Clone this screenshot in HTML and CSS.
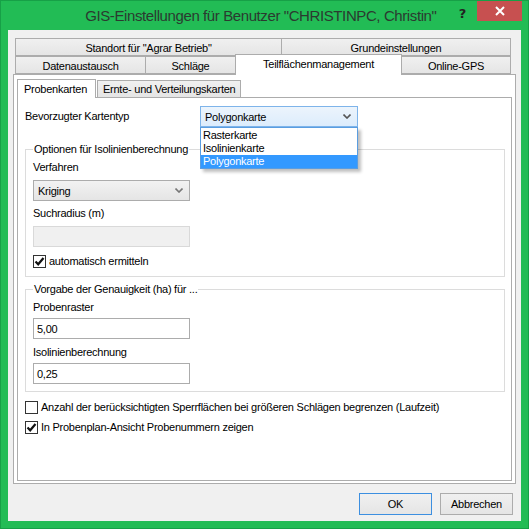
FILE: index.html
```html
<!DOCTYPE html>
<html lang="de">
<head>
    <meta charset="UTF-8">
    <title>GIS-Einstellungen</title>
    <link rel="stylesheet" href="styles.css">
</head>
<body>
    <div class="window">
        <header class="titlebar">
            <span class="title">GIS-Einstellungen für Benutzer "CHRISTINPC, Christin"</span>
            <span class="help-btn">?</span>
            <span class="close-btn">
                <svg width="10" height="10" viewBox="0 0 10 10" aria-hidden="true">
                    <path d="M1 1 L9 9 M9 1 L1 9" stroke="#fff" stroke-width="2"/>
                </svg>
            </span>
        </header>

        <main class="client">
            <div class="tabs">
                <div class="tab-row">
                    <span class="tab w266">Standort für "Agrar Betrieb"</span>
                    <span class="tab w230">Grundeinstellungen</span>
                </div>
                <div class="tab-row">
                    <span class="tab w130">Datenaustausch</span>
                    <span class="tab w90">Schläge</span>
                    <span class="tab w167 active">Teilflächenmanagement</span>
                    <span class="tab w109">Online-GPS</span>
                </div>
                <div class="panel outer-panel">
                    <div class="subtabs">
                        <span class="subtab active">Probenkarten</span>
                        <span class="subtab">Ernte- und Verteilungskarten</span>
                    </div>
                    <div class="panel inner-panel">
                        <div class="form-row">
                            <span class="label">Bevorzugter Kartentyp</span>
                            <div class="combo combo-open">
                                <span>Polygonkarte</span>
                                <svg class="chevron" width="8" height="5" viewBox="0 0 8 5" aria-hidden="true">
                                    <path d="M0.5 0.5 L4 4 L7.5 0.5" stroke="#555" stroke-width="1.6" fill="none"/>
                                </svg>
                                <ul class="dropdown">
                                    <li>Rasterkarte</li>
                                    <li>Isolinienkarte</li>
                                    <li class="selected">Polygonkarte</li>
                                </ul>
                            </div>
                        </div>

                        <fieldset class="group">
                            <legend>Optionen für Isolinienberechnung</legend>
                            <div class="field-label">Verfahren</div>
                            <div class="combo combo-small">
                                <span>Kriging</span>
                                <svg class="chevron" width="8" height="5" viewBox="0 0 8 5" aria-hidden="true">
                                    <path d="M0.5 0.5 L4 4 L7.5 0.5" stroke="#777" stroke-width="1.6" fill="none"/>
                                </svg>
                            </div>
                            <div class="field-label">Suchradius (m)</div>
                            <div class="textbox disabled"></div>
                            <label class="check check-in-group">
                                <span class="box checked"><svg width="11" height="11" viewBox="0 0 11 11" aria-hidden="true"><path d="M1.5 5.5 L4.2 8.3 L9.5 2" stroke="#111" stroke-width="2.2" fill="none"/></svg></span>
                                automatisch ermitteln
                            </label>
                        </fieldset>

                        <fieldset class="group group-second">
                            <legend>Vorgabe der Genauigkeit (ha) für ...</legend>
                            <div class="field-label">Probenraster</div>
                            <div class="textbox">5,00</div>
                            <div class="field-label">Isolinienberechnung</div>
                            <div class="textbox">0,25</div>
                        </fieldset>

                        <label class="check check-first">
                            <span class="box"></span>
                            Anzahl der berücksichtigten Sperrflächen bei größeren Schlägen begrenzen (Laufzeit)
                        </label>
                        <label class="check">
                            <span class="box checked"><svg width="11" height="11" viewBox="0 0 11 11" aria-hidden="true"><path d="M1.5 5.5 L4.2 8.3 L9.5 2" stroke="#111" stroke-width="2.2" fill="none"/></svg></span>
                            In Probenplan-Ansicht Probenummern zeigen
                        </label>
                    </div>
                </div>
            </div>

            <footer class="buttons">
                <span class="btn default">OK</span>
                <span class="btn">Abbrechen</span>
            </footer>
        </main>
    </div>
</body>
</html>
```

FILE: styles.css
```css
* {
    box-sizing: border-box;
}
body {
    margin: 0;
    background: #fff;
    font-family: 'Liberation Sans', Arial, sans-serif;
    font-size: 11px;
    letter-spacing: -0.25px;
    color: #000;
}
.window {
    width: 529px;
    height: 529px;
    background: #22bc55;
    border: 1px solid #17a047;
    display: flex;
    flex-direction: column;
}

/* title bar */
.titlebar {
    height: 29px;
    display: flex;
    align-items: flex-start;
}
.title {
    flex-grow: 1;
    text-align: center;
    white-space: nowrap;
    font-family: 'Liberation Sans', Arial, sans-serif;
    font-size: 15px;
    letter-spacing: -0.4px;
    color: #2b3a30;
    padding: 6px 0 0 72px;
}
.help-btn {
    font-family: 'DejaVu Sans', sans-serif;
    font-weight: bold;
    font-size: 13px;
    color: #222;
    margin: 5px 11px 0 10px;
}
.close-btn {
    width: 45px;
    height: 20px;
    background: #c75050;
    display: flex;
    align-items: center;
    justify-content: center;
    margin-right: 6px;
}

/* dialog body */
.client {
    flex-grow: 1;
    margin: 0 7px 7px 7px;
    background: #f0f0f0;
    display: flex;
    flex-direction: column;
}
.tabs {
    margin: 8px 5px 0 5px;
}
.tab-row {
    display: flex;
    padding-left: 2px;
    height: 18px;
}
.tab {
    height: 18px;
    border: 1px solid #acacac;
    border-right: none;
    background: linear-gradient(#f0f0f0, #e5e5e5);
    display: flex;
    align-items: center;
    justify-content: center;
    padding-top: 1px;
}
.tab:last-child {
    border-right: 1px solid #acacac;
}
.w266 { width: 266px; }
.w230 { width: 230px; }
.w130 { width: 130px; }
.w90 { width: 90px; }
.w167 { width: 167px; }
.w109 { width: 109px; }
.tab.active {
    background: #fff;
    height: 21px;
    margin-top: -2px;
    border-bottom: none;
    border-right: 1px solid #acacac;
    position: relative;
    z-index: 1;
    padding: 0 0 3px 0;
}
.tab.active + .tab {
    border-left: none;
}
.panel {
    border: 1px solid #acacac;
    background: #fff;
}
.outer-panel {
    height: 410px;
    padding: 3px;
}
.subtabs {
    display: flex;
    align-items: flex-end;
    height: 19px;
}
.subtab {
    height: 17px;
    padding: 2px 5px 0 5px;
    border: 1px solid #acacac;
    border-bottom: none;
    background: linear-gradient(#f0f0f0, #e5e5e5);
    margin-left: 1px;
}
.subtab.active {
    height: 19px;
    width: 79px;
    margin-left: 0;
    background: #fff;
    padding: 3px 0 0 6px;
    margin-bottom: -1px;
    position: relative;
    z-index: 1;
}
.inner-panel {
    height: 384px;
    padding: 0 6px 0 7px;
}

/* form parts */
.form-row {
    display: flex;
    align-items: center;
    margin-top: 8px;
}
.label {
    width: 175px;
    margin-bottom: 2px;
}
.combo {
    position: relative;
    display: flex;
    align-items: center;
    justify-content: space-between;
    height: 21px;
    padding: 0 6px 0 4px;
    border: 1px solid #acacac;
    background: linear-gradient(#f2f2f2, #e5e5e5);
}
.combo-open {
    width: 158px;
    border-color: #7eb4ea;
    background: linear-gradient(#ecf4fc, #dcecfc);
}
.combo-small {
    width: 157px;
    margin-top: 6px;
}
.dropdown {
    position: absolute;
    top: 20px;
    left: -1px;
    width: 158px;
    margin: 0;
    padding: 1px 0 0 0;
    list-style: none;
    background: #fff;
    border: 1px solid #5a9de0;
    box-shadow: 3px 3px 3px rgba(0,0,0,0.25);
    z-index: 2;
}
.dropdown li {
    height: 13px;
    line-height: 13px;
    padding-left: 2px;
}
.dropdown li.selected {
    background: #3399ff;
    color: #fff;
}
.group {
    margin: 15px 0 0 0;
    padding: 0 6px 8px 7px;
    border: 1px solid #dcdcdc;
    min-width: 0;
}
.group legend {
    padding: 0 1px;
    line-height: 14px;
    color: #000;
}
.group-second {
    margin-top: 5px;
    padding-bottom: 7px;
}
.field-label {
    line-height: 14px;
    margin-top: 4px;
}
.combo + .field-label {
    margin-top: 5px;
}
.textbox {
    width: 157px;
    height: 21px;
    margin-top: 6px;
    border: 1px solid #acacac;
    background: #fff;
    padding: 4px 0 0 3px;
}
.textbox.disabled {
    background: #f0f0f0;
    border-color: #d9d9d9;
}
.group-second .field-label + .textbox {
    margin-top: 4px;
}
.group-second .textbox + .field-label {
    margin-top: 6px;
}
.check {
    display: flex;
    align-items: center;
    line-height: 14px;
    margin-top: 6px;
}
.check-in-group {
    margin-top: 7px;
}
.check-first {
    margin-top: 8px;
}
.box {
    width: 13px;
    height: 13px;
    border: 1px solid #333;
    background: #fff;
    margin-right: 3px;
    display: flex;
    align-items: center;
    justify-content: center;
}

/* bottom buttons */
.buttons {
    display: flex;
    justify-content: flex-end;
    gap: 8px;
    margin: 9px 8px 0 0;
}
.btn {
    width: 73px;
    height: 22px;
    border: 1px solid #acacac;
    background: linear-gradient(#f0f0f0, #e5e5e5);
    display: flex;
    align-items: center;
    justify-content: center;
}
.btn.default {
    border-color: #3c8fe0;
}
```
